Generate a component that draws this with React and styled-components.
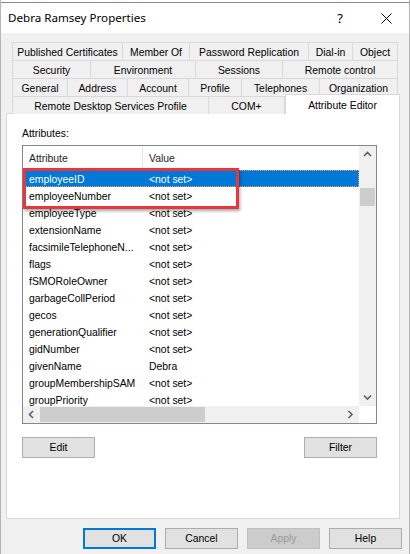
import styled, { createGlobalStyle } from "styled-components";

const GlobalStyle = createGlobalStyle`
  body {
    margin: 0;
    background: #ffffff;
    font-family: "Liberation Sans", Arial, sans-serif;
  }
  * {
    box-sizing: border-box;
  }
`;

const TAB_ROWS = [
  [
    { label: "Published Certificates", width: 111 },
    { label: "Member Of", width: 67 },
    { label: "Password Replication", width: 119 },
    { label: "Dial-in", width: 44 },
    { label: "Object", width: 45 },
  ],
  [
    { label: "Security", width: 79 },
    { label: "Environment", width: 105 },
    { label: "Sessions", width: 87 },
    { label: "Remote control", width: 115 },
  ],
  [
    { label: "General", width: 56 },
    { label: "Address", width: 60 },
    { label: "Account", width: 61 },
    { label: "Profile", width: 53 },
    { label: "Telephones", width: 78 },
    { label: "Organization", width: 78 },
  ],
  [
    { label: "Remote Desktop Services Profile", width: 197 },
    { label: "COM+", width: 76 },
    { label: "Attribute Editor", width: 115, active: true },
  ],
];

const ATTRIBUTES = [
  ["employeeID", "<not set>"],
  ["employeeNumber", "<not set>"],
  ["employeeType", "<not set>"],
  ["extensionName", "<not set>"],
  ["facsimileTelephoneN...", "<not set>"],
  ["flags", "<not set>"],
  ["fSMORoleOwner", "<not set>"],
  ["garbageCollPeriod", "<not set>"],
  ["gecos", "<not set>"],
  ["generationQualifier", "<not set>"],
  ["gidNumber", "<not set>"],
  ["givenName", "Debra"],
  ["groupMembershipSAM", "<not set>"],
  ["groupPriority", "<not set>"],
];

const Window = styled.div`
  width: 410px;
  height: 554px;
  background: #f0f0f0;
  border-left: 1px solid #b4b4b4;
  border-right: 1px solid #b4b4b4;
  display: flex;
  flex-direction: column;
  overflow: hidden;
`;

const BackStrip = styled.div`
  height: 3px;
  background: #ffffff;
  border-bottom: 1px solid #8c8c8c;
`;

const TitleBar = styled.div`
  height: 30px;
  background: #ffffff;
  display: flex;
  align-items: center;
  padding-left: 7px;
  font-family: "Noto Sans", "Open Sans", sans-serif;
  font-size: 11.6px;
  color: #000;
`;

const Title = styled.div`
  flex: 1;
  margin-top: -1px;
`;

const TitleButton = styled.div`
  width: 46px;
  display: flex;
  justify-content: center;
  align-items: center;
  font-size: 13px;
`;

const Body = styled.div`
  flex: 1;
  display: flex;
  flex-direction: column;
  padding: 9px 9px 0 5px;
`;

const TabStrip = styled.div`
  display: flex;
  flex-direction: column;
  padding-left: 6px;
`;

const TabRow = styled.div`
  display: flex;
  height: 18px;
`;

const Tab = styled.div`
  width: ${(p) => p.$width}px;
  height: ${(p) => (p.$active ? 20 : 18)}px;
  margin-top: ${(p) => (p.$active ? -2 : 0)}px;
  background: ${(p) => (p.$active ? "#ffffff" : "#f0f0f0")};
  border-top: 1px solid #d9d9d9;
  border-right: 1px solid #d9d9d9;
  border-left: ${(p) => (p.$first || p.$active ? "1px solid #d9d9d9" : "none")};
  position: relative;
  z-index: ${(p) => (p.$active ? 1 : 0)};
  display: flex;
  align-items: center;
  justify-content: center;
  padding-top: 1px;
  font-size: 10.4px;
  color: #000;
  white-space: nowrap;
`;

const Panel = styled.div`
  height: 406px;
  margin-top: -1px;
  background: #ffffff;
  border: 1px solid #d9d9d9;
  padding: 13px 0 0 15px;
  display: flex;
  flex-direction: column;
`;

const FieldLabel = styled.div`
  font-size: 10.4px;
  line-height: 13px;
  color: #000;
  margin-bottom: 5px;
`;

const ListBox = styled.div`
  position: relative;
  width: 355px;
  height: 279px;
  border: 1px solid #828790;
  display: grid;
  grid-template-columns: 1fr 17px;
  grid-template-rows: 1fr 17px;
`;

const ListView = styled.div`
  overflow: hidden;
  background: #fff;
`;

const HeaderRow = styled.div`
  display: grid;
  grid-template-columns: 120px 1fr;
  height: 24px;
  font-size: 10.4px;
  color: #1e1e1e;
`;

const HeaderCell = styled.div`
  display: flex;
  align-items: center;
  padding-left: 6px;
  border-right: ${(p) => (p.$divider ? "1px solid #e5e5e5" : "none")};
`;

const Row = styled.div`
  display: grid;
  grid-template-columns: 120px 1fr;
  height: 17px;
  align-items: center;
  padding-top: 1px;
  font-size: 10.4px;
  background: ${(p) => (p.$selected ? "#0078d7" : "transparent")};
  color: ${(p) => (p.$selected ? "#ffffff" : "#000000")};
  outline: ${(p) => (p.$selected ? "1px dotted #f2a04a" : "none")};
  outline-offset: -1px;
`;

const Cell = styled.span`
  padding-left: 6px;
  white-space: nowrap;
`;

const VScroll = styled.div`
  background: #f0f0f0;
  display: flex;
  flex-direction: column;
`;

const HScroll = styled.div`
  background: #f0f0f0;
  display: flex;
`;

const Corner = styled.div`
  background: #ffffff;
`;

const Arrow = styled.div`
  width: 17px;
  height: 17px;
  flex-shrink: 0;
  display: flex;
  align-items: center;
  justify-content: center;
`;

const VTrack = styled.div`
  flex: 1;
  padding: 25px 1px 0 1px;
`;

const VThumb = styled.div`
  height: 18px;
  background: #cdcdcd;
`;

const HTrack = styled.div`
  flex: 1;
  padding: 1px 0;
`;

const HThumb = styled.div`
  height: 100%;
  background: #cdcdcd;
`;

const Callout = styled.div`
  position: absolute;
  left: 0;
  top: 22px;
  width: 216px;
  height: 41px;
  border: 3px solid #e8363e;
  box-shadow: 1px 2px 3px rgba(0, 0, 0, 0.35);
  pointer-events: none;
`;

const ActionRow = styled.div`
  display: flex;
  justify-content: space-between;
  width: 355px;
  margin-top: 13px;
`;

const Button = styled.button`
  width: 73px;
  height: 21px;
  padding: 0;
  font-family: "Liberation Sans", Arial, sans-serif;
  font-size: 10.4px;
  background: ${(p) => (p.$disabled ? "#cccccc" : "#e1e1e1")};
  color: ${(p) => (p.$disabled ? "#9a9a9a" : "#000000")};
  border: ${(p) =>
    p.$default ? "2px solid #0078d7" : p.$disabled ? "1px solid #bfbfbf" : "1px solid #adadad"};
`;

const Footer = styled.div`
  display: flex;
  justify-content: flex-end;
  gap: 9px;
  padding: 9px 0 0 0;
  margin-right: -2px;
`;

function Chevron({ dir }) {
  const paths = {
    up: "M1 5 L4.5 1.5 L8 5",
    down: "M1 1.5 L4.5 5 L8 1.5",
    left: "M5 1 L1.5 4.5 L5 8",
    right: "M1.5 1 L5 4.5 L1.5 8",
  };
  const vertical = dir === "up" || dir === "down";
  return (
    <svg
      width={vertical ? 9 : 7}
      height={vertical ? 7 : 9}
      viewBox={vertical ? "0 0 9 7" : "0 0 7 9"}
    >
      <path d={paths[dir]} fill="none" stroke="#606060" strokeWidth="1.6" />
    </svg>
  );
}

function CloseGlyph() {
  return (
    <svg width="11" height="11" viewBox="0 0 11 11">
      <path d="M0.5 0.5 L10.5 10.5 M10.5 0.5 L0.5 10.5" stroke="#000" strokeWidth="1" />
    </svg>
  );
}

export default function App() {
  return (
    <>
      <GlobalStyle />
      <Window>
        <BackStrip />
        <TitleBar>
          <Title>Debra Ramsey Properties</Title>
          <TitleButton>?</TitleButton>
          <TitleButton>
            <CloseGlyph />
          </TitleButton>
        </TitleBar>
        <Body>
          <TabStrip>
            {TAB_ROWS.map((row, i) => (
              <TabRow key={i}>
                {row.map((tab, j) => (
                  <Tab
                    key={tab.label}
                    $width={tab.width}
                    $first={j === 0}
                    $active={tab.active}
                  >
                    {tab.label}
                  </Tab>
                ))}
              </TabRow>
            ))}
          </TabStrip>
          <Panel>
            <FieldLabel>Attributes:</FieldLabel>
            <ListBox>
              <ListView>
                <HeaderRow>
                  <HeaderCell $divider>Attribute</HeaderCell>
                  <HeaderCell>Value</HeaderCell>
                </HeaderRow>
                {ATTRIBUTES.map(([name, value], i) => (
                  <Row key={name} $selected={i === 0}>
                    <Cell>{name}</Cell>
                    <Cell>{value}</Cell>
                  </Row>
                ))}
              </ListView>
              <VScroll>
                <Arrow>
                  <Chevron dir="up" />
                </Arrow>
                <VTrack>
                  <VThumb />
                </VTrack>
                <Arrow>
                  <Chevron dir="down" />
                </Arrow>
              </VScroll>
              <HScroll>
                <Arrow>
                  <Chevron dir="left" />
                </Arrow>
                <HTrack>
                  <HThumb style={{ width: 165 }} />
                </HTrack>
                <Arrow>
                  <Chevron dir="right" />
                </Arrow>
              </HScroll>
              <Corner />
              <Callout />
            </ListBox>
            <ActionRow>
              <Button>Edit</Button>
              <Button>Filter</Button>
            </ActionRow>
          </Panel>
          <Footer>
            <Button $default>OK</Button>
            <Button>Cancel</Button>
            <Button $disabled>Apply</Button>
            <Button>Help</Button>
          </Footer>
        </Body>
      </Window>
    </>
  );
}
